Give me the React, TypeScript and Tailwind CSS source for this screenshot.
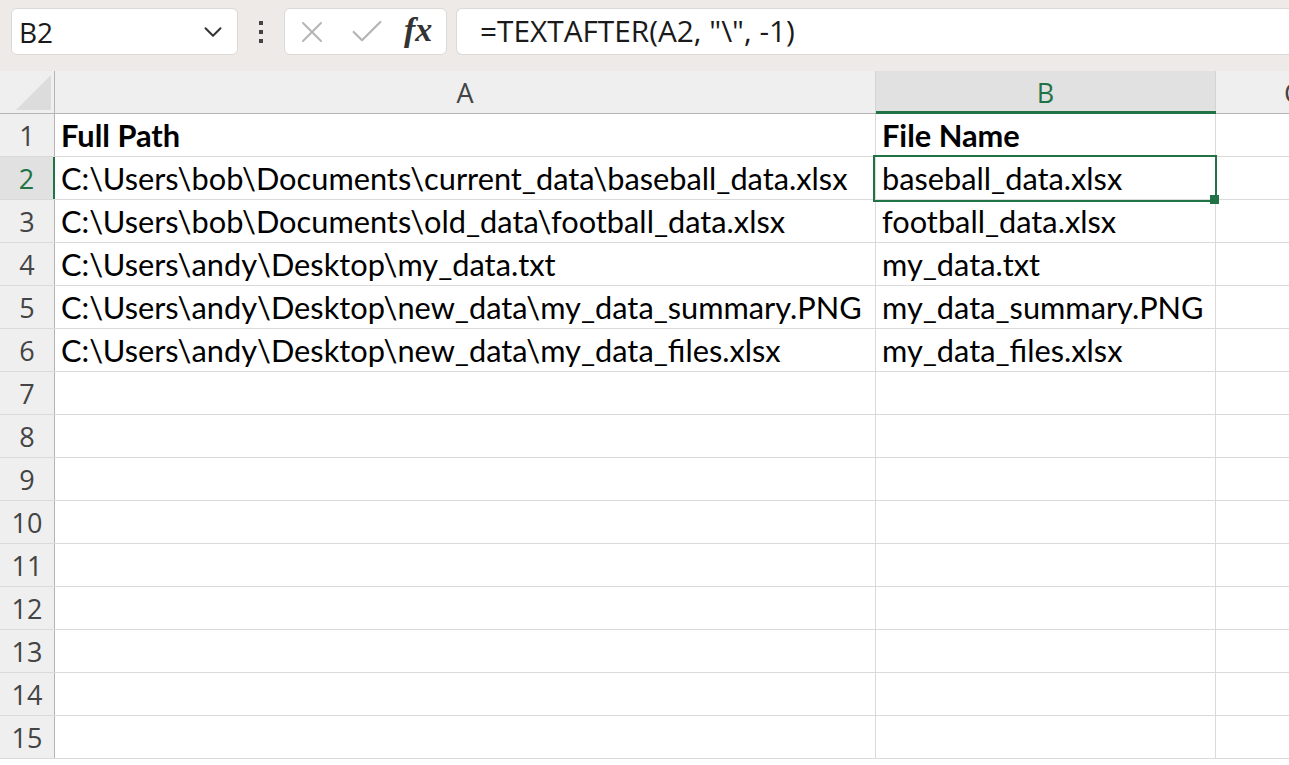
import { ChevronDown, X, Check } from "lucide-react";

const rows: [string, string][] = [
  ["Full Path", "File Name"],
  ["C:\\Users\\bob\\Documents\\current_data\\baseball_data.xlsx", "baseball_data.xlsx"],
  ["C:\\Users\\bob\\Documents\\old_data\\football_data.xlsx", "football_data.xlsx"],
  ["C:\\Users\\andy\\Desktop\\my_data.txt", "my_data.txt"],
  ["C:\\Users\\andy\\Desktop\\new_data\\my_data_summary.PNG", "my_data_summary.PNG"],
  ["C:\\Users\\andy\\Desktop\\new_data\\my_data_files.xlsx", "my_data_files.xlsx"],
];

const uiFont = "font-['Open_Sans','Noto_Sans',sans-serif]";
const cellFont = "font-['Lato','Open_Sans',sans-serif]";

export default function App() {
  const allRows = Array.from({ length: 15 }, (_, i) => rows[i] ?? ["", ""]);

  return (
    <div className="w-[1289px] h-[765px] overflow-hidden bg-white flex flex-col">
      {/* Formula bar */}
      <div className={`h-[71px] shrink-0 bg-[#eeeae8] flex items-start pt-[8px] pl-[11px] ${uiFont}`}>
        <div className="w-[227px] h-[47px] bg-white rounded-[6px] border border-[#dcd8d6] flex items-center pl-[7px] pr-[9px]">
          <span className="text-[28px] text-[#1a1a1a] flex-1">B2</span>
          <ChevronDown className="w-[30px] h-[30px] text-[#333]" strokeWidth={1.6} />
        </div>
        <div className="w-[46px] h-[47px] flex flex-col items-center justify-center gap-[5px]">
          <div className="w-[4px] h-[4px] bg-[#444]" />
          <div className="w-[4px] h-[4px] bg-[#444]" />
          <div className="w-[4px] h-[4px] bg-[#444]" />
        </div>
        <div className="w-[163px] h-[47px] bg-white rounded-[6px] border border-[#dcd8d6] flex items-center pl-[9px] gap-[17px]">
          <X className="w-[36px] h-[36px] text-[#b4b4b4]" strokeWidth={1.3} />
          <Check className="w-[40px] h-[40px] text-[#b4b4b4]" strokeWidth={1.3} />
          <span className="font-['Liberation_Serif',serif] italic font-bold text-[34px] text-[#333] leading-none -mt-[4px]">
            fx
          </span>
        </div>
        <div className="ml-[9px] flex-1 h-[47px] bg-white rounded-l-[6px] border border-r-0 border-[#dcd8d6] flex items-center pl-[23px]">
          <span className="text-[29.8px] text-[#1a1a1a]">=TEXTAFTER(A2, "\", -1)</span>
        </div>
      </div>

      {/* Column headers */}
      <div className={`h-[43px] shrink-0 flex bg-[#efefef] border-b border-[#b4b4b4] ${uiFont}`}>
        <div className="w-[55px] shrink-0 border-r border-[#b4b4b4] relative flex items-end justify-end pr-[3px] pb-[3px]">
          <svg width="35" height="35" viewBox="0 0 35 35">
            <polygon points="35,0 35,35 0,35" fill="#dcdcdc" />
          </svg>
        </div>
        <div className="w-[821px] shrink-0 border-r border-[#d4d4d4] flex items-center justify-center pt-[3px] text-[27px] text-[#444]">
          A
        </div>
        <div className="w-[340px] shrink-0 border-r border-[#d4d4d4] bg-[#e1e1e1] flex items-center justify-center pt-[3px] text-[27px] text-[#217346] relative">
          B
          <div className="absolute left-0 right-[-1px] bottom-[-1px] h-[3px] bg-[#217346]" />
        </div>
        <div className="flex-1 flex items-center pl-[68px] pt-[3px] text-[27px] text-[#444]">C</div>
      </div>

      {/* Grid */}
      <div className="flex-1 flex flex-col">
        {allRows.map(([a, b], i) => {
          const n = i + 1;
          const selected = n === 2;
          const bold = n === 1 ? "font-bold" : "";
          return (
            <div key={n} className="h-[43px] shrink-0 flex border-b border-[#dadada]">
              <div
                className={`w-[55px] shrink-0 flex items-center justify-center pt-[2px] text-[27px] ${uiFont} ${
                  selected
                    ? "bg-[#e1e1e1] text-[#217346] border-r-[2px] border-[#217346]"
                    : "bg-[#efefef] text-[#444] border-r border-[#b4b4b4]"
                }`}
              >
                {n}
              </div>
              <div
                className={`w-[821px] shrink-0 border-r border-[#dadada] flex items-center pl-[6px] pt-[2px] text-[30.75px] text-black whitespace-nowrap ${cellFont} ${bold}`}
              >
                {a}
              </div>
              <div
                className={`w-[340px] shrink-0 border-r border-[#dadada] flex items-center pl-[6px] pt-[2px] text-[30.75px] text-black whitespace-nowrap relative ${cellFont} ${bold}`}
              >
                {b}
                {selected && (
                  <>
                    <div className="absolute z-10 -left-[3px] -top-[2px] -right-[2px] -bottom-[3px] border-[2px] border-[#217346]" />
                    <div className="absolute z-20 -right-[4px] -bottom-[5px] w-[9px] h-[9px] bg-[#217346]" />
                  </>
                )}
              </div>
              <div className="flex-1" />
            </div>
          );
        })}
      </div>
    </div>
  );
}
